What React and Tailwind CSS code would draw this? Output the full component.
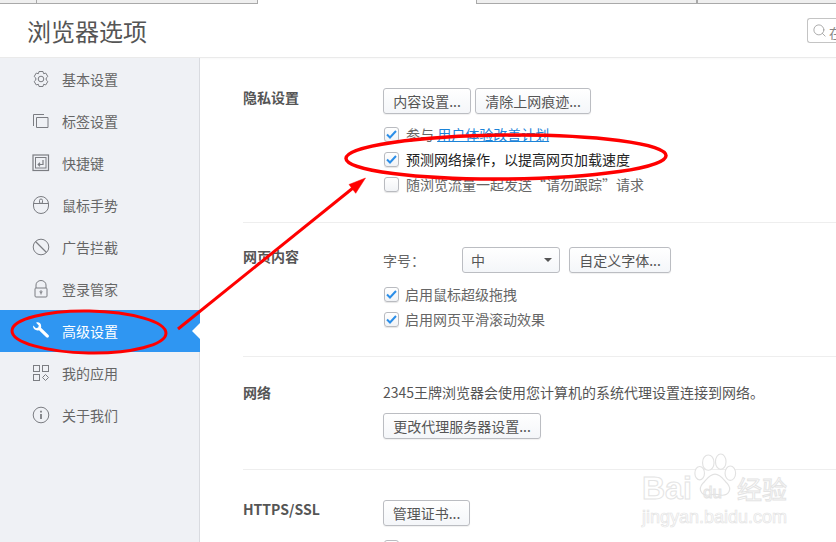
import React from 'react';
import { Search } from 'lucide-react';

const font = { fontFamily: '"Noto Sans CJK SC", "Noto Sans", sans-serif' };

const GearIcon = () => (
  <svg width="18" height="18" viewBox="0 0 18 18" fill="none" stroke="currentColor" strokeWidth="1">
    <path d="M7 1.500h4l.6 2.200 2.200-.6 2 3.400L14.200 8v2l1.600 1.500-2 3.400-2.200-.6-.6 2.200H7l-.6-2.200-2.200.6-2-3.400L3.800 10V8L2.200 6.500l2-3.400 2.200.6z" />
    <circle cx="9" cy="9" r="2.800" />
  </svg>
);
const TabIcon = () => (
  <svg width="18" height="18" viewBox="0 0 18 18" fill="none" stroke="currentColor" strokeWidth="1">
    <path d="M1.500 14V2.500H12" />
    <path d="M4.500 5.500h11.500V15.500H4.500z" />
  </svg>
);
const KeyIcon = () => (
  <svg width="18" height="18" viewBox="0 0 18 18" fill="none" stroke="currentColor">
    <rect x="1" y="1" width="15.500" height="15.500" strokeWidth="1.200" />
    <rect x="3.500" y="3.500" width="10.500" height="10.500" strokeWidth="1" />
    <path d="M11 6v4.500H6.500M8 8.800l-1.800 1.700L8 12.200" strokeWidth="1.200" />
  </svg>
);
const MouseIcon = () => (
  <svg width="18" height="18" viewBox="0 0 18 18" fill="none" stroke="currentColor" strokeWidth="1">
    <rect x="1.500" y="0.500" width="15" height="17" rx="7.500" />
    <path d="M1.500 7.500h15" />
    <rect x="7.500" y="3" width="3" height="4.500" rx="1.500" />
  </svg>
);
const BlockIcon = () => (
  <svg width="18" height="18" viewBox="0 0 18 18" fill="none" stroke="currentColor" strokeWidth="1">
    <circle cx="9" cy="9" r="7.800" />
    <path d="M3.500 3.500l11 11" strokeWidth="1.200" />
  </svg>
);
const LockIcon = () => (
  <svg width="18" height="18" viewBox="0 0 18 18" fill="none" stroke="currentColor" strokeWidth="1">
    <path d="M4 8V5a5 4.500 0 0 1 10 0v3" />
    <rect x="3" y="8" width="12" height="9" rx="1" />
    <circle cx="9" cy="11.800" r="1" />
    <path d="M9 12.500v2" />
  </svg>
);
const WrenchIcon = () => (
  <svg width="18" height="18" viewBox="0 0 18 18" fill="currentColor">
    <path d="M1.200 3.600 4 6.200l2.200-.6.600-2.200L4.100.7C6.300-.3 9.300 1 9.200 4.300c0 .7-.1 1.100-.2 1.500l7.500 7.100c1.300 1.300-.5 3.700-2.200 2.400L7 8.300C3.700 9.200.4 7 1.200 3.600z" />
  </svg>
);
const AppsIcon = () => (
  <svg width="18" height="18" viewBox="0 0 18 18" fill="none" stroke="currentColor" strokeWidth="1">
    <rect x="1.500" y="1.500" width="6" height="6" />
    <rect x="10.500" y="1.500" width="6" height="6" />
    <rect x="1.500" y="10.500" width="6" height="6" />
    <path d="M13.500 10.500l3 3-3 3-3-3z" />
  </svg>
);
const InfoIcon = () => (
  <svg width="18" height="18" viewBox="0 0 18 18" fill="none" stroke="currentColor" strokeWidth="1">
    <circle cx="9" cy="9" r="7.800" />
    <path d="M9 8v5" strokeWidth="1.800" />
    <path d="M9 4.800v1.600" strokeWidth="1.800" />
  </svg>
);

const menu = [
  ['基本设置', GearIcon],
  ['标签设置', TabIcon],
  ['快捷键', KeyIcon],
  ['鼠标手势', MouseIcon],
  ['广告拦截', BlockIcon],
  ['登录管家', LockIcon],
  ['高级设置', WrenchIcon, true],
  ['我的应用', AppsIcon],
  ['关于我们', InfoIcon],
];

const Btn = ({ children, className = '' }) => (
  <button className={`h-[26px] text-[14px] leading-none text-[#555] bg-gradient-to-b from-white to-[#f4f6f9] border border-[#bbbdc2] rounded-[3px] shadow-[0_1px_1px_rgba(0,0,0,0.06)] whitespace-nowrap ${className}`}>
    {children}
  </button>
);

const Check = ({ checked, children, dark, gap = 'ml-[7px]' }) => (
  <div className="flex h-[25px] items-center">
    <span className="flex h-[15px] w-[15px] ml-px items-center justify-center bg-gradient-to-b from-white to-[#f1f3f6] border border-[#b9bbc0] rounded-[3px] shadow-[0_1px_1px_rgba(0,0,0,0.1)]">
      {checked && (
        <svg width="11" height="9" viewBox="0 0 11 9" fill="none" stroke="#2b8ee8" strokeWidth="2">
          <path d="M1 4.500l3 3 6-6.500" />
        </svg>
      )}
    </span>
    <span className={`${gap} text-[14px] whitespace-nowrap ${dark ? 'text-[#222]' : 'text-[#666]'}`}>{children}</span>
  </div>
);

const Section = ({ title, className = '', children }) => (
  <section className={`flex border-b border-[#eeeeee] ${className}`}>
    <h3 className="w-[140px] shrink-0 -mt-px text-[14px] font-bold text-[#555] leading-5">{title}</h3>
    <div className="flex-1 min-w-0">{children}</div>
  </section>
);

export default function App() {
  return (
    <div className="relative h-[542px] w-[836px] overflow-hidden bg-white" style={font}>
      {/* Browser tab strip, only its bottom edge shows */}
      <div className="flex h-1">
        <div className="w-[37px] border-r border-b border-[#a9a9a9] bg-[#efefef]" />
        <div className="w-[221px] border-r border-b border-[#a9a9a9] bg-[#efefef]" />
        <div className="w-[218px] bg-white" />
        <div className="w-[221px] border-x border-b border-[#a9a9a9] bg-[#efefef]" />
        <div className="flex-1 border-b border-l border-[#a9a9a9] bg-[#efefef]" />
      </div>

      <header className="flex h-[54px] items-center justify-between border-b border-[#eaeaea] pl-[27px] shadow-[0_1px_2px_rgba(0,0,0,0.03)]">
        <h1 className="text-[24px] font-normal text-[#555]">浏览器选项</h1>
        <div className="flex h-[25px] w-[29px] items-center rounded-l-[3px] border-y border-l border-[#c4c4c4] pl-1 text-[13px] text-[#888] overflow-hidden">
          <Search size={15} strokeWidth={1.300} className="shrink-0 text-[#999]" />
        </div>
      </header>

      <div className="flex h-[484px]">
        <aside className="w-[200px] shrink-0 border-r border-[#d9dbe0] bg-[#eff1f5]">
          {menu.map(([label, Icon, active]) => (
            <div
              key={label}
              className={`relative flex h-[42px] items-center pl-[32px] text-[14px] ${active ? 'bg-[#2f96f2] text-white -mr-px' : 'text-[#666]'}`}
            >
              <span className={active ? 'text-white' : 'text-[#7b7d82]'}><Icon /></span>
              <span className="ml-[12px]">{label}</span>
              {active && <span className="absolute right-0 top-[13px] h-0 w-0 border-y-[8px] border-r-[8px] border-y-transparent border-r-white" />}
            </div>
          ))}
        </aside>

        <main className="flex-1 min-w-0 pl-[43px]">
          <Section title="隐私设置" className="h-[165px] pt-[30px]">
            <div className="flex gap-[4px]">
              <Btn className="w-[88px]">内容设置...</Btn>
              <Btn className="w-[116px]">清除上网痕迹...</Btn>
            </div>
            <div className="mt-[8px]">
              <Check checked>参与 <span className="text-[#1b83d8] underline">用户体验改善计划</span></Check>
              <Check checked dark>预测网络操作，以提高网页加载速度</Check>
              <Check>随浏览流量一起发送“请勿跟踪”请求</Check>
            </div>
          </Section>

          <Section title="网页内容" className="h-[134px] pt-[24px]">
            <div className="flex items-center">
              <span className="w-[79px] text-[14px] text-[#666]">字号：</span>
              <div className="flex h-[26px] w-[98px] items-center justify-between rounded-[3px] border border-[#bbbdc2] bg-gradient-to-b from-white to-[#f4f6f9] pl-2 pr-[7px] text-[14px] text-[#555]">
                中
                <span className="h-0 w-0 border-x-[4px] border-t-[4px] border-x-transparent border-t-[#555]" />
              </div>
              <Btn className="ml-[9px] w-[102px]">自定义字体...</Btn>
            </div>
            <div className="mt-[9px]">
              <Check checked gap="ml-[6px]">启用鼠标超级拖拽</Check>
              <Check checked gap="ml-[6px]">启用网页平滑滚动效果</Check>
            </div>
          </Section>

          <Section title="网络" className="h-[113px] pt-[26px]">
            <p className="-mt-px text-[14px] leading-5 text-[#555] whitespace-nowrap">2345王牌浏览器会使用您计算机的系统代理设置连接到网络。</p>
            <Btn className="mt-[11px] w-[158px]">更改代理服务器设置...</Btn>
          </Section>

          <section className="flex pt-[30px]">
            <h3 className="w-[140px] shrink-0 -mt-px text-[14px] font-bold text-[#555] leading-5">HTTPS/SSL</h3>
            <div>
              <Btn className="w-[87px]">管理证书...</Btn>
              <div className="mt-[14px]"><span className="block h-[15px] w-[15px] ml-px border border-[#b9bbc0] rounded-[3px]" /></div>
            </div>
          </section>
        </main>
      </div>

      {/* Search box placeholder, clipped by the window edge */}
      <span className="absolute left-[829px] top-[23px] text-[13px] leading-5 text-[#888]">在</span>

      {/* Baidu watermark */}
      <div className="pointer-events-none absolute left-[642px] top-[452px] w-[180px] text-transparent [-webkit-text-stroke:1px_#e4e4e4]">
        <svg className="absolute left-[50px] top-0" width="46" height="50" viewBox="0 0 48 50" fill="#fff" stroke="#e2e2e2" strokeWidth="1.200">
          <ellipse cx="17" cy="10" rx="6" ry="8" />
          <ellipse cx="30" cy="9" rx="5.500" ry="8" />
          <ellipse cx="40" cy="21" rx="5.500" ry="7.500" />
          <ellipse cx="8" cy="21" rx="5" ry="7" />
          <path d="M24 22c6 0 9 6 13 10 5 6 1 12-5 12-4 0-5-1-8-1s-5 1-8 1c-6 0-10-6-5-12 4-4 7-10 13-10z" />
        </svg>
        <div className="absolute left-0 top-[16px] text-[32px] font-bold leading-10 whitespace-nowrap" style={{ fontFamily: '"Liberation Sans", sans-serif' }}>Bai</div>
        <div className="absolute left-[61px] top-[29px] text-[17px] leading-6" style={{ fontFamily: '"Liberation Sans", sans-serif' }}>du</div>
        <div className="absolute left-[95px] top-[16px] text-[25px] leading-10 whitespace-nowrap">经验</div>
        <div className="absolute left-0 top-[53px] text-[18px] leading-6 whitespace-nowrap [-webkit-text-stroke:0.7px_#e4e4e4]" style={{ fontFamily: '"Liberation Sans", sans-serif' }}>jingyan.baidu.com</div>
      </div>

      {/* Red annotations drawn over the screenshot */}
      <svg className="pointer-events-none absolute inset-0" width="836" height="542" viewBox="0 0 836 542" fill="none" stroke="#ff0000">
        <ellipse cx="89" cy="332" rx="77" ry="21" strokeWidth="3" transform="rotate(1 89 332)" />
        <ellipse cx="506" cy="157" rx="160" ry="22" strokeWidth="3.500" transform="rotate(-0.500 506 157)" />
        <path d="M178 329 L353 188" strokeWidth="3" />
        <path d="M365.500 178 L349 184.500 L355.700 193.300 Z" fill="#ff0000" strokeWidth="0.500" />
      </svg>
    </div>
  );
}
